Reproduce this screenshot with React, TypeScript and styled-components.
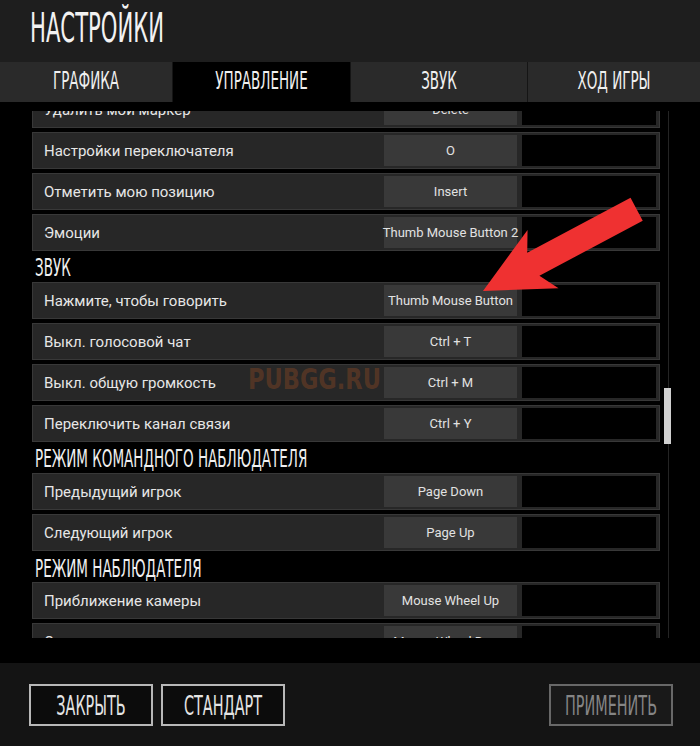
import React from "react";
import styled, { createGlobalStyle } from "styled-components";

const COND = `"Liberation Sans Narrow", "DejaVu Sans Condensed", "Roboto", sans-serif`;

type Binding = { label: string; keyName: string };
type Section = { title?: string; rows: Binding[] };

const SECTIONS: Section[] = [
  {
    rows: [
      { label: "Удалить мой маркер", keyName: "Delete" },
      { label: "Настройки переключателя", keyName: "O" },
      { label: "Отметить мою позицию", keyName: "Insert" },
      { label: "Эмоции", keyName: "Thumb Mouse Button 2" },
    ],
  },
  {
    title: "ЗВУК",
    rows: [
      { label: "Нажмите, чтобы говорить", keyName: "Thumb Mouse Button" },
      { label: "Выкл. голосовой чат", keyName: "Ctrl + T" },
      { label: "Выкл. общую громкость", keyName: "Ctrl + M" },
      { label: "Переключить канал связи", keyName: "Ctrl + Y" },
    ],
  },
  {
    title: "РЕЖИМ КОМАНДНОГО НАБЛЮДАТЕЛЯ",
    rows: [
      { label: "Предыдущий игрок", keyName: "Page Down" },
      { label: "Следующий игрок", keyName: "Page Up" },
    ],
  },
  {
    title: "РЕЖИМ НАБЛЮДАТЕЛЯ",
    rows: [
      { label: "Приближение камеры", keyName: "Mouse Wheel Up" },
      { label: "Отдаление камеры", keyName: "Mouse Wheel Down" },
    ],
  },
];

const TABS = ["ГРАФИКА", "УПРАВЛЕНИЕ", "ЗВУК", "ХОД ИГРЫ"];

const App: React.FC = () => {
  return (
    <>
      <GlobalStyle />
      <Page>
        <Header>
          <Title>НАСТРОЙКИ</Title>
        </Header>
        <Tabs>
          {TABS.map((tab) => (
            <Tab key={tab} $active={tab === "УПРАВЛЕНИЕ"}>
              <TabText>{tab}</TabText>
            </Tab>
          ))}
        </Tabs>

        <Body>
          <Viewport>
            <List>
              {SECTIONS.map((section, i) => (
                <React.Fragment key={"section" + i}>
                  {section.title && (
                    <SectionTitle>
                      <SectionText>{section.title}</SectionText>
                    </SectionTitle>
                  )}
                  {section.rows.map((row) => (
                    <Row key={row.label}>
                      <Label>{row.label}</Label>
                      <KeyCell>{row.keyName}</KeyCell>
                      <AltCell />
                    </Row>
                  ))}
                </React.Fragment>
              ))}
            </List>
          </Viewport>
          <ScrollTrack>
            <ScrollThumb />
          </ScrollTrack>
        </Body>

        <Footer>
          <FooterButton>
            <ButtonText>ЗАКРЫТЬ</ButtonText>
          </FooterButton>
          <FooterButton>
            <ButtonText>СТАНДАРТ</ButtonText>
          </FooterButton>
          <Spacer />
          <FooterButton $disabled>
            <ButtonText>ПРИМЕНИТЬ</ButtonText>
          </FooterButton>
        </Footer>

        <Watermark>PUBGG.RU</Watermark>
        <ArrowLayer viewBox="0 0 700 746" width={700} height={746}>
          <polygon
            transform="translate(483 291) rotate(-28)"
            points="0,0 68,-33 57,-13 174,-13 174,13 57,13 68,33"
            fill="#ef3131"
          />
        </ArrowLayer>
      </Page>
    </>
  );
};

const GlobalStyle = createGlobalStyle`
  html, body {
    margin: 0;
    padding: 0;
    background: #000;
  }
  body {
    font-family: Roboto, "Noto Sans", sans-serif;
  }
`;

const Page = styled.div`
  position: relative;
  width: 700px;
  height: 746px;
  background: #000;
  overflow: hidden;
  display: flex;
  flex-direction: column;
`;

const Header = styled.header`
  flex: none;
  height: 62px;
  box-sizing: border-box;
  padding: 0 0 6px 30px;
  background: #1e1e1e;
  display: flex;
  align-items: center;
`;

const Title = styled.h1`
  margin: 0;
  font-family: ${COND};
  font-weight: 400;
  font-size: 23.5px;
  color: #f2f2f2;
  transform: scaleY(1.72);
`;

const Tabs = styled.nav`
  flex: none;
  height: 40px;
  display: grid;
  grid-template-columns: 172px 177px 176px 1fr;
  gap: 1px;
  background: #151515;
`;

const Tab = styled.div<{ $active?: boolean }>`
  display: flex;
  align-items: center;
  justify-content: center;
  padding-bottom: 3px;
  box-sizing: border-box;
  background: ${(props) => (props.$active ? "#000" : "#2a2a2a")};
`;

const TabText = styled.span`
  display: inline-block;
  font-family: ${COND};
  font-size: 15px;
  color: #f0f0f0;
  transform: scaleY(1.65);
`;

const Body = styled.main`
  flex: none;
  height: 561px;
  display: flex;
  box-sizing: border-box;
  padding: 9px 0 25px 32px;
`;

const Viewport = styled.div`
  width: 628px;
  height: 527px;
  overflow: hidden;
`;

const List = styled.div`
  margin-top: -20px;
  display: flex;
  flex-direction: column;
  gap: 4px;
`;

const SectionTitle = styled.div`
  flex: none;
  height: 23px;
  padding-left: 3px;
  line-height: 26px;
`;

const SectionText = styled.span`
  display: inline-block;
  font-family: ${COND};
  font-size: 15px;
  color: #f0f0f0;
  transform: scaleY(1.7);
`;

const Row = styled.div`
  flex: none;
  height: 37px;
  box-sizing: border-box;
  border: 1px solid #383838;
  background: #272727;
  display: grid;
  grid-template-columns: 1fr 133px 134px;
  column-gap: 5px;
  padding: 2px 3px 2px 0;
`;

const Label = styled.div`
  display: flex;
  align-items: center;
  padding-left: 11px;
  font-size: 15px;
  color: #e6e6e6;
  white-space: nowrap;
`;

const KeyCell = styled.div`
  display: flex;
  align-items: center;
  justify-content: center;
  background: #393939;
  font-size: 13px;
  color: #e2e2e2;
  white-space: nowrap;
`;

const AltCell = styled.div`
  background: #000;
`;

const ScrollTrack = styled.div`
  margin-left: 4px;
  width: 7px;
  height: 527px;
  background: linear-gradient(to right, transparent 4px, #242424 4px, #242424 5px, transparent 5px);
`;

const ScrollThumb = styled.div`
  margin-top: 277px;
  height: 56px;
  background: #d0d0d0;
`;

const Footer = styled.footer`
  flex: none;
  height: 83px;
  box-sizing: border-box;
  padding: 1px 27px 0 29px;
  background: #141414;
  display: flex;
  align-items: center;
  gap: 8px;
`;

const Spacer = styled.div`
  flex: 1;
`;

const FooterButton = styled.button<{ $disabled?: boolean }>`
  width: 124px;
  height: 42px;
  padding: 0;
  box-sizing: border-box;
  border: 2px solid ${(props) => (props.$disabled ? "#686868" : "#b8b8b8")};
  background: ${(props) => (props.$disabled ? "#191919" : "#0c0c0c")};
  color: ${(props) => (props.$disabled ? "#858585" : "#e4e4e4")};
  display: flex;
  align-items: center;
  justify-content: center;
`;

const ButtonText = styled.span`
  display: inline-block;
  font-family: ${COND};
  font-size: 16px;
  transform: scaleY(1.64);
`;

const Watermark = styled.div`
  position: absolute;
  left: 248px;
  top: 365px;
  font-family: ${COND};
  font-weight: 700;
  font-size: 25px;
  color: rgba(150, 75, 35, 0.4);
  transform: scaleY(1.15);
  pointer-events: none;
`;

const ArrowLayer = styled.svg`
  position: absolute;
  left: 0;
  top: 0;
  pointer-events: none;
`;

export default App;
